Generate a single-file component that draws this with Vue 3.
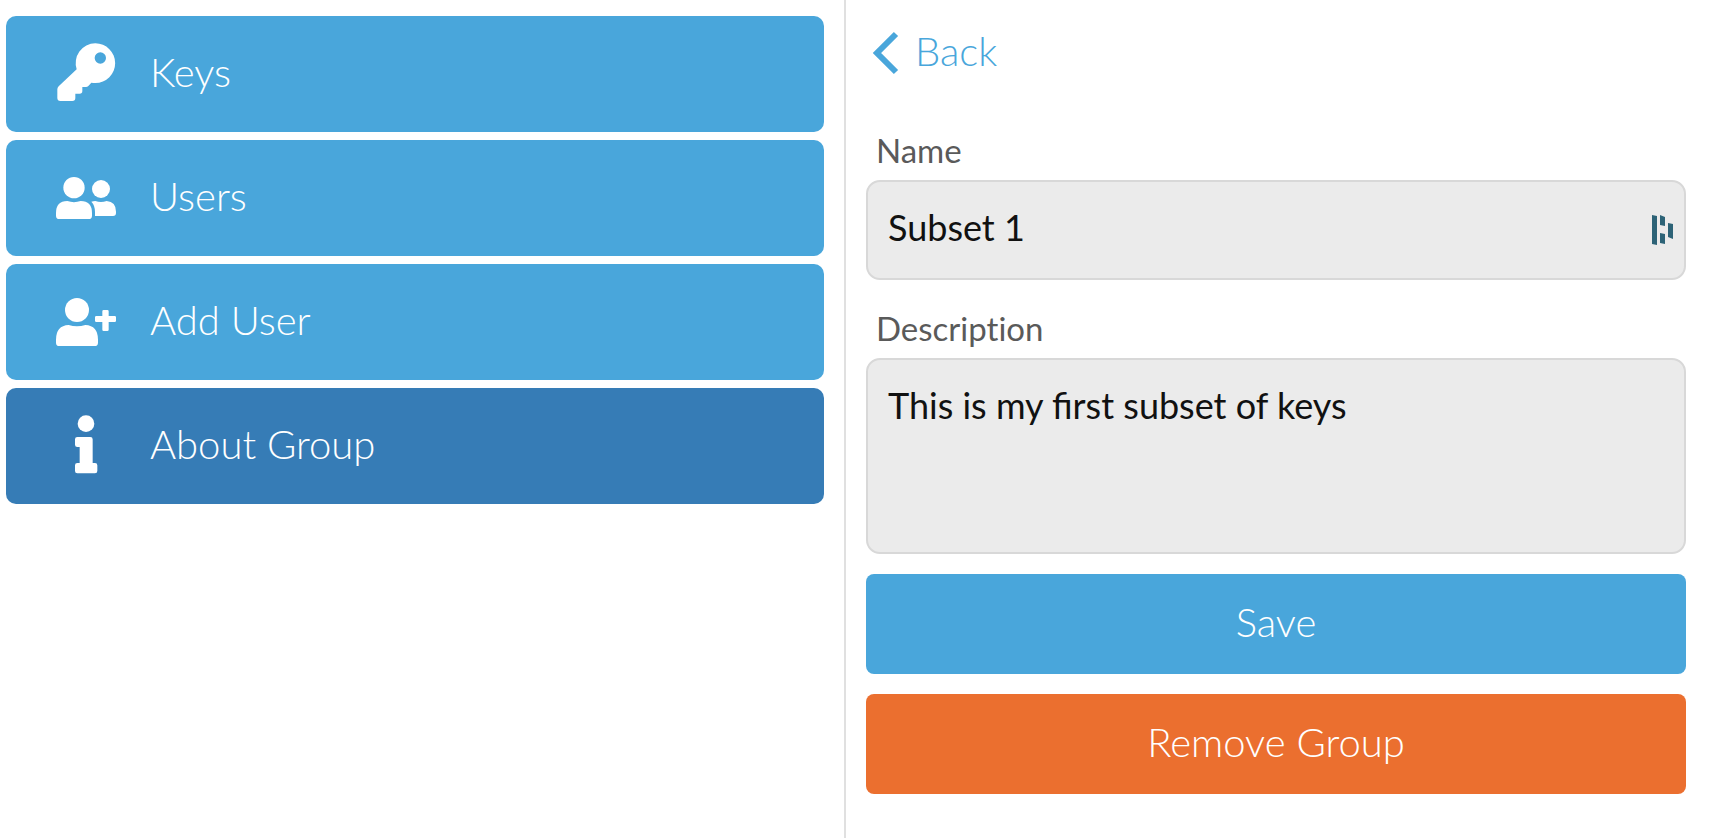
<script setup>
import { ref } from 'vue'

const name = ref('Subset 1')
const description = ref('This is my first subset of keys')

const menu = [
  { label: 'Keys', icon: 'key' },
  { label: 'Users', icon: 'users' },
  { label: 'Add User', icon: 'add' },
  { label: 'About Group', icon: 'info', active: true },
]
</script>

<template>
  <div class="page">
    <nav class="menu">
      <button v-for="item in menu" :key="item.label" type="button" class="item" :class="{ active: item.active }">
        <svg v-if="item.icon === 'key'" class="icon" viewBox="0 4 180 180" aria-hidden="true">
          <path fill-rule="evenodd" d="M118 2a59.500 59.500 0 0 1 0 119q-6 0-12-1l-9 10q-3 3-7 3H79v12q0 8-8 8H58v13q0 9-9 9H13q-9 0-9-9v-26q0-5 4-9l54-51A59.500 59.500 0 0 1 118 2ZM133 29a17 17 0 1 0 0 34 17 17 0 0 0 0-34Z" />
        </svg>
        <svg v-else-if="item.icon === 'users'" class="icon" viewBox="0 0 180 180" aria-hidden="true">
          <circle cx="54" cy="59" r="32" />
          <path d="M34 99q20 7 40 0 34 0 34 36v8q0 10-10 10H10q-10 0-10-10v-8q0-36 34-36Z" />
          <circle cx="135" cy="63" r="27" />
          <path d="M106 101q6-2 12-2 17 6 34 0 28 2 28 32v4q0 9-9 9h-54v-12q0-20-11-31Z" />
        </svg>
        <svg v-else-if="item.icon === 'add'" class="icon" viewBox="0 0 180 180" aria-hidden="true">
          <circle cx="63" cy="54" r="36" />
          <path d="M38 99q25 8 50 0 38 2 38 44v9q0 10-10 10H10q-10 0-10-10v-9q0-42 38-44ZM143 54h11q4 0 4 4v14h18q4 0 4 4v10q0 4-4 4h-18v23q0 4-4 4h-11q-4 0-4-4V90h-18q-4 0-4-4V76q0-4 4-4h18V58q0-4 4-4Z" />
        </svg>
        <svg v-else class="icon" viewBox="0 4 180 180" aria-hidden="true">
          <circle cx="90" cy="27" r="25" />
          <path d="M64 67h39q7 0 7 7v71h7q7 0 7 7v17q0 7-7 7H64q-7 0-7-7v-17q0-7 7-7h7V97h-7q-7 0-7-7V74q0-7 7-7Z" />
        </svg>
        <span class="text">{{ item.label }}</span>
      </button>
    </nav>

    <main class="detail">
      <a class="back" href="#">
        <svg class="chevron" viewBox="0 0 26 42" aria-hidden="true">
          <path d="M23 2 4 21l19 19" fill="none" stroke="currentColor" stroke-width="6" />
        </svg>
        <span class="text">Back</span>
      </a>
      <form class="form" @submit.prevent>
        <label for="group-name">Name</label>
        <div class="field">
          <input id="group-name" v-model="name" type="text">
          <svg class="manager" viewBox="0 0 21 30" aria-hidden="true">
            <path d="M0 0 5 1V30L0 29ZM8 0 13 2V11L8 10ZM8 18 13 19V29L8 28ZM16 8 21 9V24L16 22Z" />
          </svg>
        </div>
        <label for="group-description">Description</label>
        <textarea id="group-description" v-model="description"></textarea>
        <button type="submit" class="action">Save</button>
        <button type="button" class="action remove">Remove Group</button>
      </form>
    </main>
  </div>
</template>

<style>
body {
  margin: 0;
  background: #fff;
}
</style>

<style scoped>
.page {
  display: grid;
  grid-template-columns: 1fr 1fr;
  min-height: 100vh;
  box-sizing: border-box;
  padding-right: 36px;
  font-family: Lato, "Open Sans", sans-serif;
  font-weight: 300;
}

.page * {
  box-sizing: border-box;
}

button,
input,
textarea {
  margin: 0;
  font: inherit;
}

.menu {
  display: flex;
  flex-direction: column;
  gap: 8px;
  padding: 16px 20px 16px 6px;
  border-right: 2px solid #e0e0e0;
}

.item {
  display: flex;
  align-items: center;
  gap: 34px;
  height: 116px;
  padding: 0 50px;
  border: 0;
  border-radius: 10px;
  background: #49a6db;
  color: #fff;
  font-size: 40px;
  line-height: 48px;
  text-align: left;
  cursor: pointer;
}

.item.active {
  background: #367cb6;
}

.text {
  padding-bottom: 4px;
}

.icon {
  flex: none;
  width: 60px;
  height: 60px;
  overflow: visible;
  fill: currentColor;
}

.detail {
  padding: 28px 6px 28px 20px;
}

.back {
  display: inline-flex;
  align-items: center;
  gap: 16px;
  height: 50px;
  padding-left: 7px;
  color: #49a6db;
  font-size: 40px;
  line-height: 48px;
  text-decoration: none;
}

.chevron {
  width: 26px;
  height: 42px;
  overflow: visible;
}

.form {
  display: flex;
  flex-direction: column;
  padding-top: 52px;
}

label {
  padding: 0 10px;
  margin-bottom: 10px;
  color: #5a5a5a;
  font-size: 33px;
  font-weight: 400;
  font-variant-ligatures: none;
  line-height: 40px;
}

.field {
  position: relative;
  margin-bottom: 28px;
}

input,
textarea {
  display: block;
  width: 100%;
  border: 2px solid #d8d8d8;
  border-radius: 14px;
  outline: none;
  background: #ebebeb;
  color: #111;
  font-size: 36px;
  font-weight: 400;
  line-height: 40px;
}

input {
  height: 100px;
  padding: 0 48px 6px 20px;
}

textarea {
  height: 196px;
  padding: 25px 20px;
  resize: none;
}

.manager {
  position: absolute;
  top: 35px;
  right: 13px;
  width: 21px;
  height: 30px;
  fill: #2d6377;
}

.action {
  height: 100px;
  margin-top: 20px;
  padding: 0 20px 4px;
  border: 0;
  border-radius: 8px;
  background: #49a6db;
  color: #fff;
  font-size: 40px;
  line-height: 48px;
  cursor: pointer;
}

.remove {
  background: #eb6f2f;
}
</style>
